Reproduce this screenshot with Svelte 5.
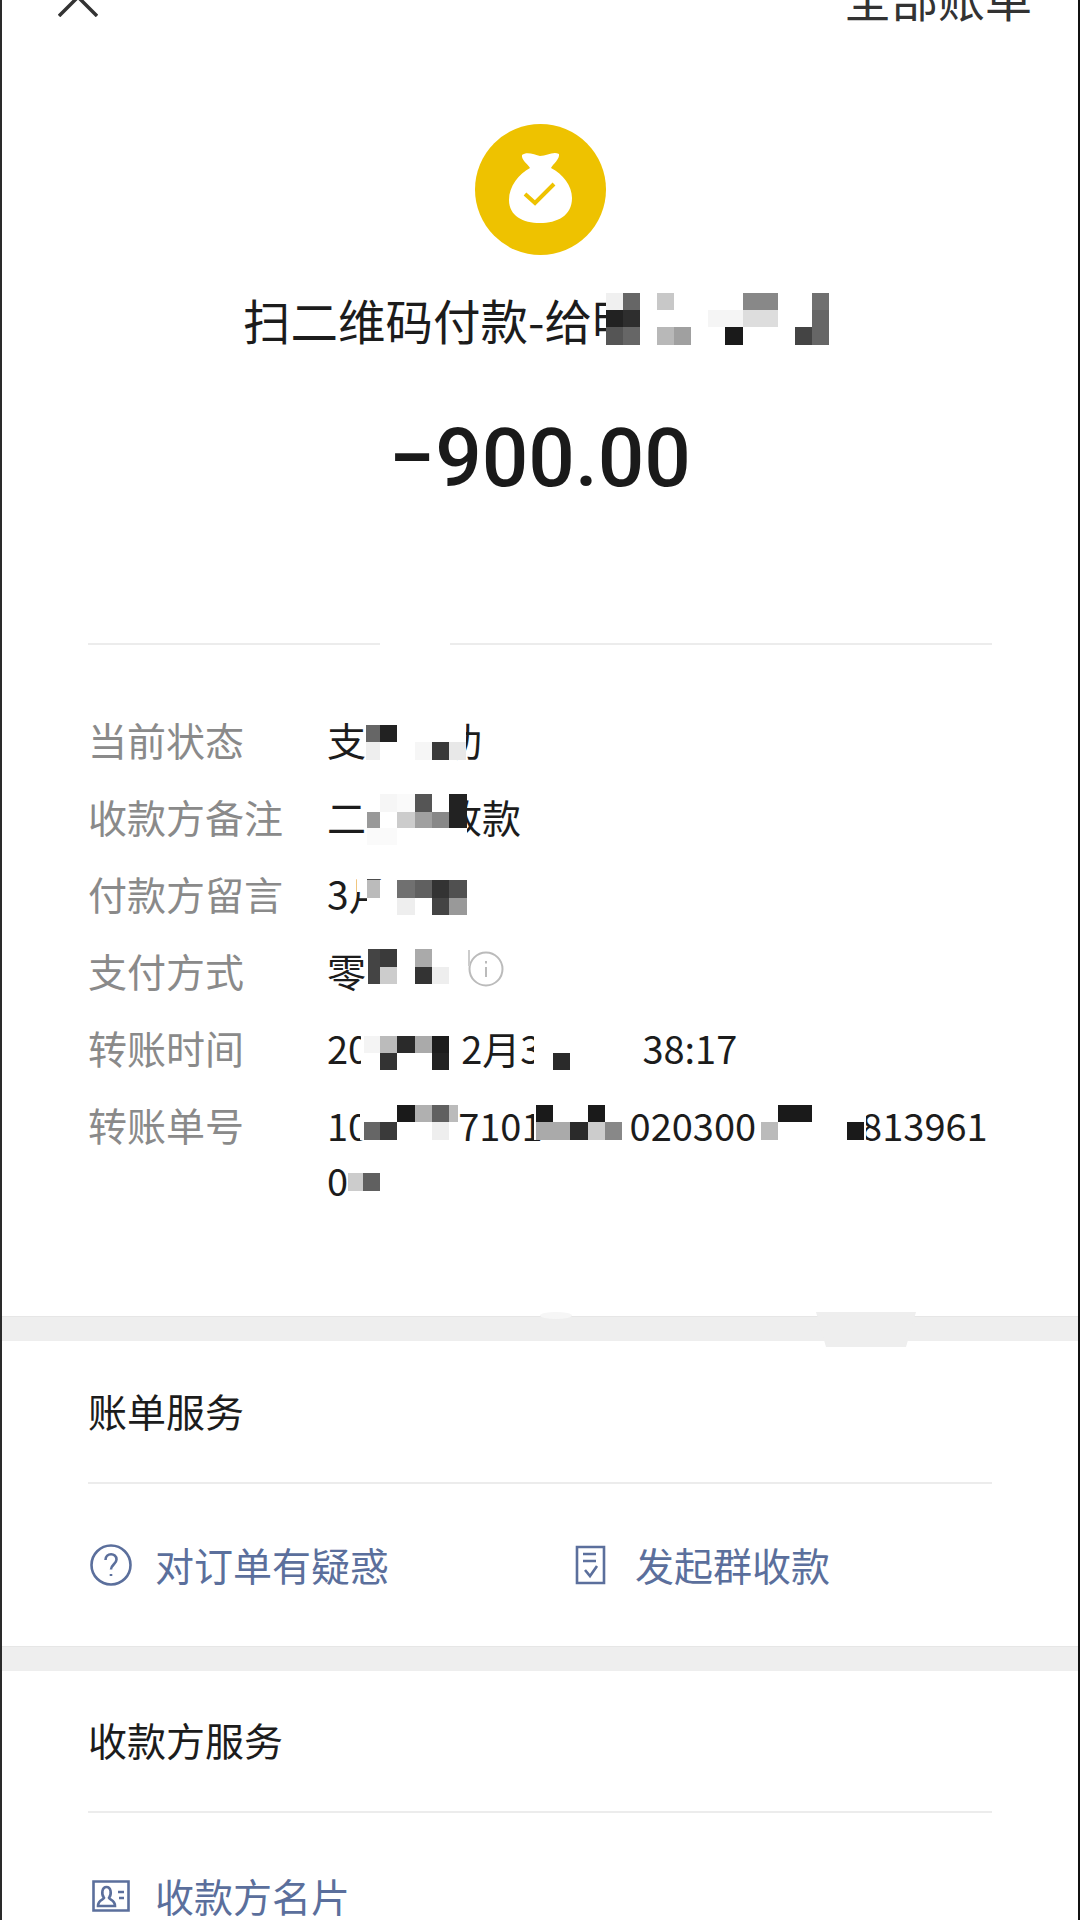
<script>
  // mosaic blocks that hide private data: [x, y, w, h, colour]
  const masks = [
    // divider gap
    [380, 640, 70, 8, '#fff'],
    // title
    [606, 293, 224, 52, '#fff'],
    [606, 293, 17, 17, '#f0f0f0'], [623, 293, 17, 17, '#666'], [657, 293, 17, 17, '#c8c8c8'],
    [743, 293, 18, 17, '#888'], [761, 293, 17, 17, '#888'], [812, 293, 17, 17, '#707070'],
    [606, 310, 17, 17, '#222'], [623, 310, 17, 17, '#2e2e2e'], [708, 310, 17, 17, '#f5f5f5'], [725, 310, 18, 17, '#f5f5f5'],
    [743, 310, 18, 17, '#ddd'], [761, 310, 17, 17, '#ddd'], [812, 310, 17, 17, '#666'],
    [606, 327, 17, 18, '#555'], [623, 327, 17, 18, '#666'], [657, 327, 17, 18, '#b8b8b8'], [674, 327, 17, 18, '#a0a0a0'],
    [725, 327, 18, 18, '#1a1a1a'], [795, 327, 17, 18, '#444'], [812, 327, 17, 18, '#666'],
    // status
    [366, 725, 100, 35, '#fff'],
    [366, 725, 14, 17, '#666'], [380, 725, 17, 17, '#222'], [366, 742, 14, 18, '#eee'],
    [415, 742, 17, 18, '#f6f6f6'], [432, 742, 17, 18, '#3a3a3a'], [449, 742, 17, 18, '#e8e8e8'],
    // payee note
    [367, 794, 100, 51, '#fff'],
    [380, 794, 17, 18, '#f6f6f6'], [397, 794, 18, 18, '#fafafa'], [415, 794, 17, 18, '#555'], [449, 794, 18, 18, '#222'],
    [367, 812, 13, 16, '#999'], [397, 812, 18, 16, '#ccc'], [415, 812, 17, 16, '#a0a0a0'], [432, 812, 17, 16, '#888'], [449, 812, 18, 16, '#222'],
    [367, 828, 30, 17, '#fafafa'],
    // payer message
    [357, 878, 10, 14, '#fff'], [367, 880, 100, 35, '#fff'],
    [367, 880, 13, 18, '#bbb'], [397, 880, 18, 18, '#707070'], [415, 880, 17, 18, '#606060'], [432, 880, 17, 18, '#333'], [449, 880, 18, 18, '#505050'],
    [397, 898, 18, 17, '#eee'], [432, 898, 17, 17, '#444'], [449, 898, 18, 17, '#999'],
    // payment method
    [368, 949, 97, 35, '#fff'],
    [368, 949, 12, 18, '#444'], [380, 949, 17, 18, '#3a3a3a'], [415, 949, 17, 18, '#aaa'],
    [368, 967, 12, 17, '#444'], [380, 967, 17, 17, '#ccc'], [415, 967, 17, 17, '#333'], [432, 967, 17, 17, '#eee'],
    [468, 950, 2, 16, '#ccc'],
    // time
    [361, 1036, 95, 34, '#fff'],
    [364, 1036, 16, 17, '#f4f4f4'], [380, 1036, 17, 17, '#bbb'], [397, 1036, 18, 17, '#2a2a2a'], [415, 1036, 17, 17, '#aaa'], [432, 1036, 17, 17, '#1c1c1c'],
    [380, 1053, 17, 17, '#333'], [432, 1053, 17, 17, '#222'],
    [534, 1036, 108, 34, '#fff'], [553, 1053, 17, 17, '#2a2a2a'],
    // order no
    [360, 1105, 98, 35, '#fff'],
    [397, 1105, 18, 17, '#1a1a1a'], [415, 1105, 17, 17, '#b0b0b0'], [432, 1105, 17, 17, '#606060'], [449, 1105, 9, 17, '#bbb'],
    [364, 1122, 16, 18, '#666'], [380, 1122, 17, 18, '#3a3a3a'], [432, 1122, 17, 18, '#eee'],
    [534, 1105, 96, 35, '#fff'],
    [536, 1105, 17, 17, '#1a1a1a'], [588, 1105, 17, 17, '#1a1a1a'],
    [536, 1122, 34, 18, '#aaa'], [570, 1122, 18, 18, '#2a2a2a'], [588, 1122, 17, 18, '#ccc'], [605, 1122, 17, 18, '#888'],
    [760, 1105, 106, 35, '#fff'],
    [761, 1122, 17, 18, '#bbb'], [778, 1105, 34, 17, '#1a1a1a'], [847, 1122, 17, 18, '#1a1a1a'],
    [348, 1173, 15, 18, '#ccc'], [363, 1173, 17, 18, '#606060']
  ];
</script>

<div class="page">
  <div class="top">
    <svg class="close" viewBox="0 0 40 40"><path d="M1 1 L39 39 M39 1 L1 39" /></svg>
    <span>全部账单</span>
  </div>

  <div class="logo">
    <svg viewBox="0 0 131 131">
      <circle cx="65.5" cy="65.5" r="65.5" fill="#eec200" />
      <path fill="#fff" d="M47 31 C52 27 60 31 65 32 C72 32 78 27 84 30 C85 35 78 40 76 44 C88 50 97 62 97 74 C97 92 82 99 65 99 C48 99 34 92 34 76 C34 62 44 50 55 44 C53 40 46 36 47 31 Z" />
      <path fill="none" stroke="#eec200" stroke-width="4" d="M50 70 L60 79 L79 60" />
    </svg>
  </div>
  <h1 class="title">扫二维码付款-给明</h1>
  <div class="amount">−900.00</div>

  <div class="line first"></div>

  <div class="info">
    <div class="row"><span class="label">当前状态</span><div class="val">支<span class="w2">功</span></div></div>
    <div class="row"><span class="label">收款方备注</span><div class="val">二<span class="w3">收款</span></div></div>
    <div class="row"><span class="label">付款方留言</span><div class="val">3月</div></div>
    <div class="row">
      <span class="label">支付方式</span>
      <div class="val">零
        <svg class="tip" viewBox="0 0 36 36">
          <circle cx="18" cy="18" r="16.5" />
          <path d="M18 16 V26 M18 10 V12.5" />
        </svg>
      </div>
    </div>
    <div class="row"><span class="label">转账时间</span><div class="val num">20<span class="t1">2月3</span><span class="t2">38:17</span></div></div>
    <div class="row">
      <span class="label">转账单号</span>
      <div class="val num">
        <div>10<span class="n1">7101</span><span class="n2">020300</span><span class="n3">813961</span></div>
        <div>0</div>
      </div>
    </div>
  </div>

  <div class="band"></div>

  <div class="sec-title">账单服务</div>
  <div class="line"></div>
  <div class="links">
    <div class="link">
      <svg class="ico" viewBox="0 0 42 42">
        <circle cx="21" cy="21" r="19.5" />
        <path d="M15.5 16 C15.5 8.5 26.5 8.5 26.5 15.5 C26.5 20 21 20.5 21 25.5 M21 30 V32" />
      </svg>
      <span>对订单有疑惑</span>
    </div>
    <div class="link second">
      <svg class="doc" viewBox="0 0 31 40">
        <path d="M2 2 H29 V38 H2 Z M8 9 H21 M8 16 H21 M10 25 L15 31 L22 21" />
      </svg>
      <span>发起群收款</span>
    </div>
  </div>

  <div class="band small"></div>

  <div class="sec-title">收款方服务</div>
  <div class="line"></div>
  <div class="links last">
    <div class="link">
      <svg class="card" viewBox="0 0 38 32">
        <path d="M1.5 1.5 H36.5 V30.5 H1.5 Z M6 26 H23 C23 20 18 20 17 18 C20 14 19 7 14.5 7 C10 7 9 14 12 18 C11 20 6 20 6 26 Z M26 12 H32 M27 18 H32" />
      </svg>
      <span>收款方名片</span>
    </div>
  </div>

  {#each masks as m}
    <div class="cell" style="left:{m[0]}px;top:{m[1]}px;width:{m[2]}px;height:{m[3]}px;background:{m[4]}"></div>
  {/each}
  <div class="patch"></div>
  <div class="chip"></div>
</div>

<style>
  :global(body) {
    margin: 0;
    background: #fff;
  }

  .page {
    position: relative;
    box-sizing: border-box;
    width: 1080px;
    height: 1920px;
    overflow: hidden;
    background: #fff;
    border-left: 2px solid #2a2a2a;
    border-right: 2px solid #111;
    margin: 0;
    font-family: "Noto Sans CJK SC", "Noto Sans", sans-serif;
    color: #1c1c1c;
  }

  .top {
    display: flex;
    justify-content: space-between;
    align-items: center;
    height: 46px;
    margin-top: -26px;
    padding: 0 46px 0 56px;
    font-size: 47px;
    line-height: 46px;
    color: #333;
  }

  .close {
    width: 40px;
    height: 40px;
    fill: none;
    stroke: #333;
    stroke-width: 3.5;
  }

  .logo {
    width: 131px;
    height: 131px;
    margin: 104px auto 0;
  }

  .logo svg {
    display: block;
    width: 131px;
    height: 131px;
  }

  .title {
    margin: 35px 0 0 241px;
    height: 60px;
    font-size: 47.5px;
    line-height: 60px;
    font-weight: 400;
    white-space: nowrap;
  }

  .amount {
    margin-top: 58px;
    height: 100px;
    font-family: Roboto, sans-serif;
    font-size: 82px;
    font-weight: 500;
    line-height: 100px;
    text-align: center;
    color: #1a1a1a;
  }

  .line {
    height: 2px;
    margin: 0 86px 0 86px;
    background: #ececec;
  }

  .line.first {
    margin-top: 135px;
  }

  .info {
    padding: 67px 86px 109px 86px;
  }

  .row {
    display: grid;
    grid-template-columns: 239px 1fr;
    margin-bottom: 22px;
    font-size: 39px;
    line-height: 55px;
  }

  .row:last-child {
    margin-bottom: 0;
  }

  .label {
    color: #8a8a8a;
    white-space: nowrap;
  }

  .val {
    position: relative;
    white-space: nowrap;
  }

  .num {
    font-size: 38px;
  }

  .w2 { margin-left: 77px; }
  .w3 { margin-left: 77px; }
  .t1 { margin-left: 92px; }
  .t2 { margin-left: 101px; }
  .n1 { margin-left: 89px; }
  .n2 { margin-left: 87px; }
  .n3 { margin-left: 105px; }

  .tip {
    position: absolute;
    left: 141px;
    top: 8px;
    width: 36px;
    height: 36px;
    fill: none;
    stroke: #bbb;
    stroke-width: 2;
  }

  .band {
    height: 25px;
    background: #eee;
    border-top: 1px solid #e6e6e6;
    box-sizing: border-box;
  }

  .sec-title {
    box-sizing: border-box;
    height: 141px;
    padding: 0 0 4px 86px;
    display: flex;
    align-items: center;
    font-size: 39px;
  }

  .band.small + .sec-title {
    height: 140px;
  }

  .links {
    display: flex;
    align-items: center;
    height: 162px;
    padding-left: 88px;
  }

  .links.last {
    height: 166px;
  }

  .link {
    display: flex;
    align-items: center;
    font-size: 39px;
    color: #5b6f9c;
    white-space: nowrap;
  }

  .link span {
    margin-bottom: 2px;
  }

  .link svg {
    fill: none;
    stroke: #5b6f9c;
    flex: none;
  }

  .link.second {
    margin-left: 186px;
  }

  .ico {
    width: 42px;
    height: 42px;
    margin-right: 23px;
    stroke-width: 2.6;
  }

  .doc {
    width: 31px;
    height: 40px;
    margin-right: 29px;
    stroke-width: 2.6;
  }

  .card {
    width: 38px;
    height: 32px;
    margin: 0 25px 0 2px;
    stroke-width: 2.6;
  }

  .cell {
    position: absolute;
    margin-left: -2px;
  }

  .patch {
    position: absolute;
    left: 814px;
    top: 1312px;
    width: 100px;
    height: 35px;
    background: #eee;
    clip-path: polygon(0 0, 100% 0, 90% 100%, 10% 100%);
  }

  .chip {
    position: absolute;
    left: 538px;
    top: 1312px;
    width: 32px;
    height: 7px;
    background: #f6f6f6;
    border-radius: 50%;
  }
</style>
